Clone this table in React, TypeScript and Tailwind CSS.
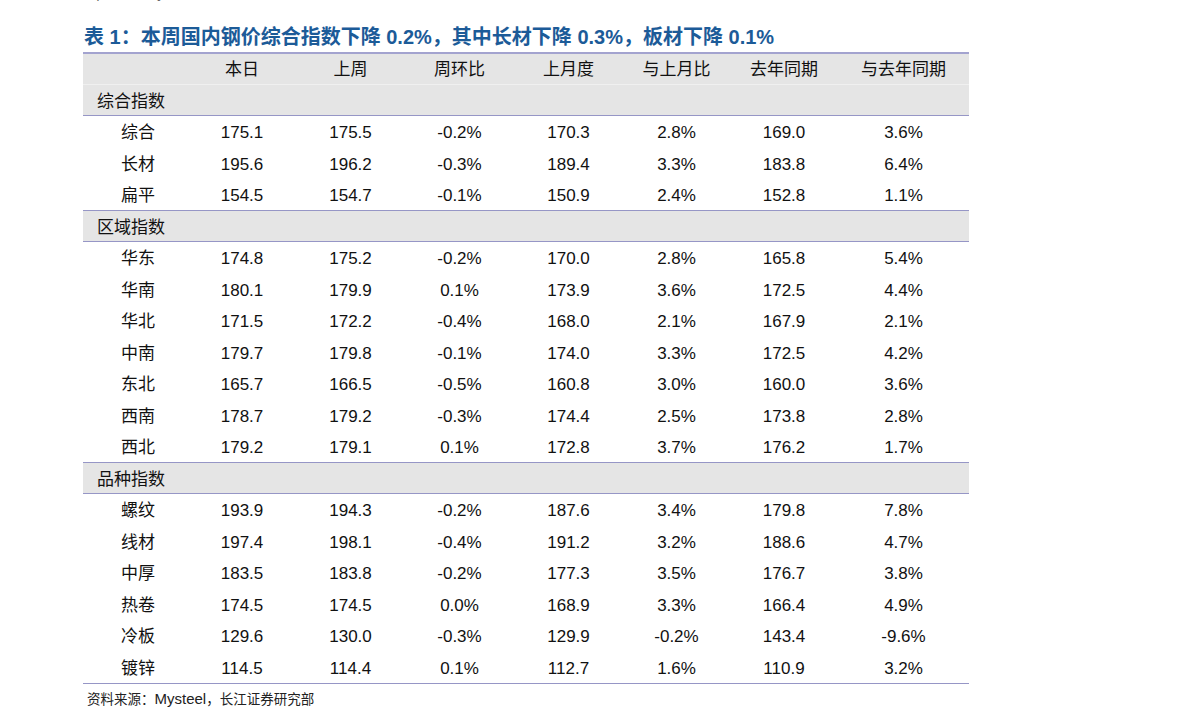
import React from 'react';

type Row = [string, string, string, string, string, string, string, string];

interface Group {
  title: string;
  rows: Row[];
}

const headers = ['本日', '上周', '周环比', '上月度', '与上月比', '去年同期', '与去年同期'];

const groups: Group[] = [
  {
    title: '综合指数',
    rows: [
      ['综合', '175.1', '175.5', '-0.2%', '170.3', '2.8%', '169.0', '3.6%'],
      ['长材', '195.6', '196.2', '-0.3%', '189.4', '3.3%', '183.8', '6.4%'],
      ['扁平', '154.5', '154.7', '-0.1%', '150.9', '2.4%', '152.8', '1.1%'],
    ],
  },
  {
    title: '区域指数',
    rows: [
      ['华东', '174.8', '175.2', '-0.2%', '170.0', '2.8%', '165.8', '5.4%'],
      ['华南', '180.1', '179.9', '0.1%', '173.9', '3.6%', '172.5', '4.4%'],
      ['华北', '171.5', '172.2', '-0.4%', '168.0', '2.1%', '167.9', '2.1%'],
      ['中南', '179.7', '179.8', '-0.1%', '174.0', '3.3%', '172.5', '4.2%'],
      ['东北', '165.7', '166.5', '-0.5%', '160.8', '3.0%', '160.0', '3.6%'],
      ['西南', '178.7', '179.2', '-0.3%', '174.4', '2.5%', '173.8', '2.8%'],
      ['西北', '179.2', '179.1', '0.1%', '172.8', '3.7%', '176.2', '1.7%'],
    ],
  },
  {
    title: '品种指数',
    rows: [
      ['螺纹', '193.9', '194.3', '-0.2%', '187.6', '3.4%', '179.8', '7.8%'],
      ['线材', '197.4', '198.1', '-0.4%', '191.2', '3.2%', '188.6', '4.7%'],
      ['中厚', '183.5', '183.8', '-0.2%', '177.3', '3.5%', '176.7', '3.8%'],
      ['热卷', '174.5', '174.5', '0.0%', '168.9', '3.3%', '166.4', '4.9%'],
      ['冷板', '129.6', '130.0', '-0.3%', '129.9', '-0.2%', '143.4', '-9.6%'],
      ['镀锌', '114.5', '114.4', '0.1%', '112.7', '1.6%', '110.9', '3.2%'],
    ],
  },
];

const cols = 'grid grid-cols-[105px_108px_109px_109px_109px_107px_108px_1fr]';

export default function App() {
  return (
    <div className="min-h-[727px] w-[1191px] overflow-hidden bg-white font-['Liberation_Sans','Noto_Sans_CJK_SC',sans-serif] text-[#111]">
      {/* tail of the previous paragraph, cut off by the page top */}
      <div className="-mt-[15px] h-[18px] pl-[90px] text-[16px] leading-[18px] text-[#333]">中 0.34%。</div>

      <div className="ml-[84px] mt-[22px] h-[24px] text-[20px] font-bold leading-[24px] text-[#1c5b98]">
        表 1：本周国内钢价综合指数下降 0.2%，其中长材下降 0.3%，板材下降 0.1%
      </div>

      <div className="ml-[83px] mt-[3px] w-[886px] text-[17px]">
        {/* header */}
        <div className={`${cols} h-[32px] items-center border-t-2 border-[#a3a3cf] bg-[#e5e5e5] pt-[2px]`}>
          <div />
          {headers.map((h) => (
            <div key={h} className="text-center">
              {h}
            </div>
          ))}
        </div>

        {groups.map((g, gi) => (
          <div key={g.title}>
            <div
              className={`flex h-[31.5px] items-center border-b border-[#9696c6] bg-[#e5e5e5] pl-[14px] pt-[3px] ${
                gi === 0 ? 'border-t border-t-[#f0f0f0]' : 'border-t border-t-[#9696c6]'
              }`}
            >
              {g.title}
            </div>
            {g.rows.map((r) => (
              <div key={r[0]} className={`${cols} h-[31.5px] items-center pt-[3px]`}>
                <div className="pl-[38px]">{r[0]}</div>
                {r.slice(1).map((v, i) => (
                  <div key={i} className="text-center">
                    {v}
                  </div>
                ))}
              </div>
            ))}
          </div>
        ))}

        <div className="border-t border-[#9696c6]" />
      </div>

      <div className="ml-[87px] mt-[5px] h-[20px] text-[13.5px] leading-[20px] text-[#222]">
        资料来源：<span className="text-[15px]">Mysteel</span>，长江证券研究部
      </div>
    </div>
  );
}
